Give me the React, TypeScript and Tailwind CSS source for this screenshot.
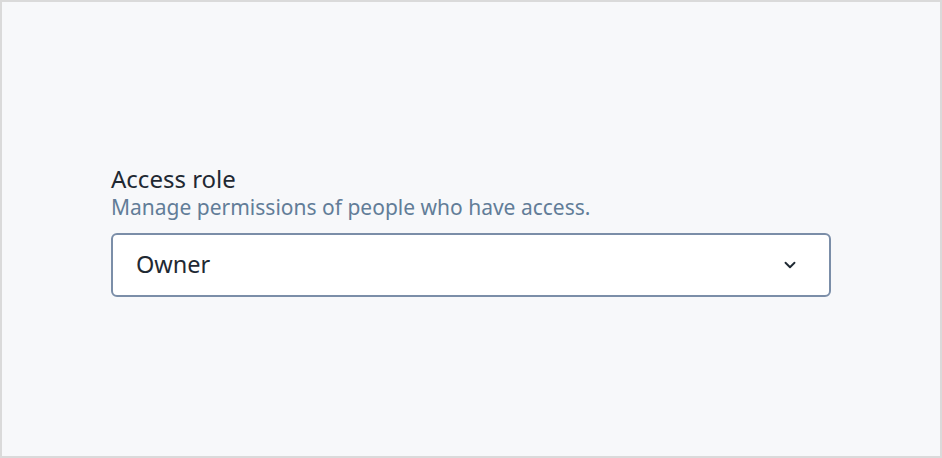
import { ChevronDown } from "lucide-react";

const App = () => {
  return (
    <div className="h-[458px] w-[942px] border-2 border-[#dadada] bg-[#f7f8fa] flex items-center justify-center">
      <div className="w-[720px] flex flex-col mt-[2px] font-['Noto_Sans',sans-serif]">
        <label className="text-[24px] leading-[30px] text-[#1f2933]">
          Access role
        </label>
        <p className="text-[21px] leading-[26px] text-[#627d98]">
          Manage permissions of people who have access.
        </p>
        <div className="mt-[13px] h-[64px] rounded-[6px] border-2 border-[#7b8ea8] bg-white flex items-center justify-between pl-[23px] pr-[30px]">
          <span className="text-[23.5px] text-[#1f2933]">Owner</span>
          <ChevronDown className="w-[18px] h-[18px] text-[#1f2933]" strokeWidth={2.5} />
        </div>
      </div>
    </div>
  );
};

export default App;
